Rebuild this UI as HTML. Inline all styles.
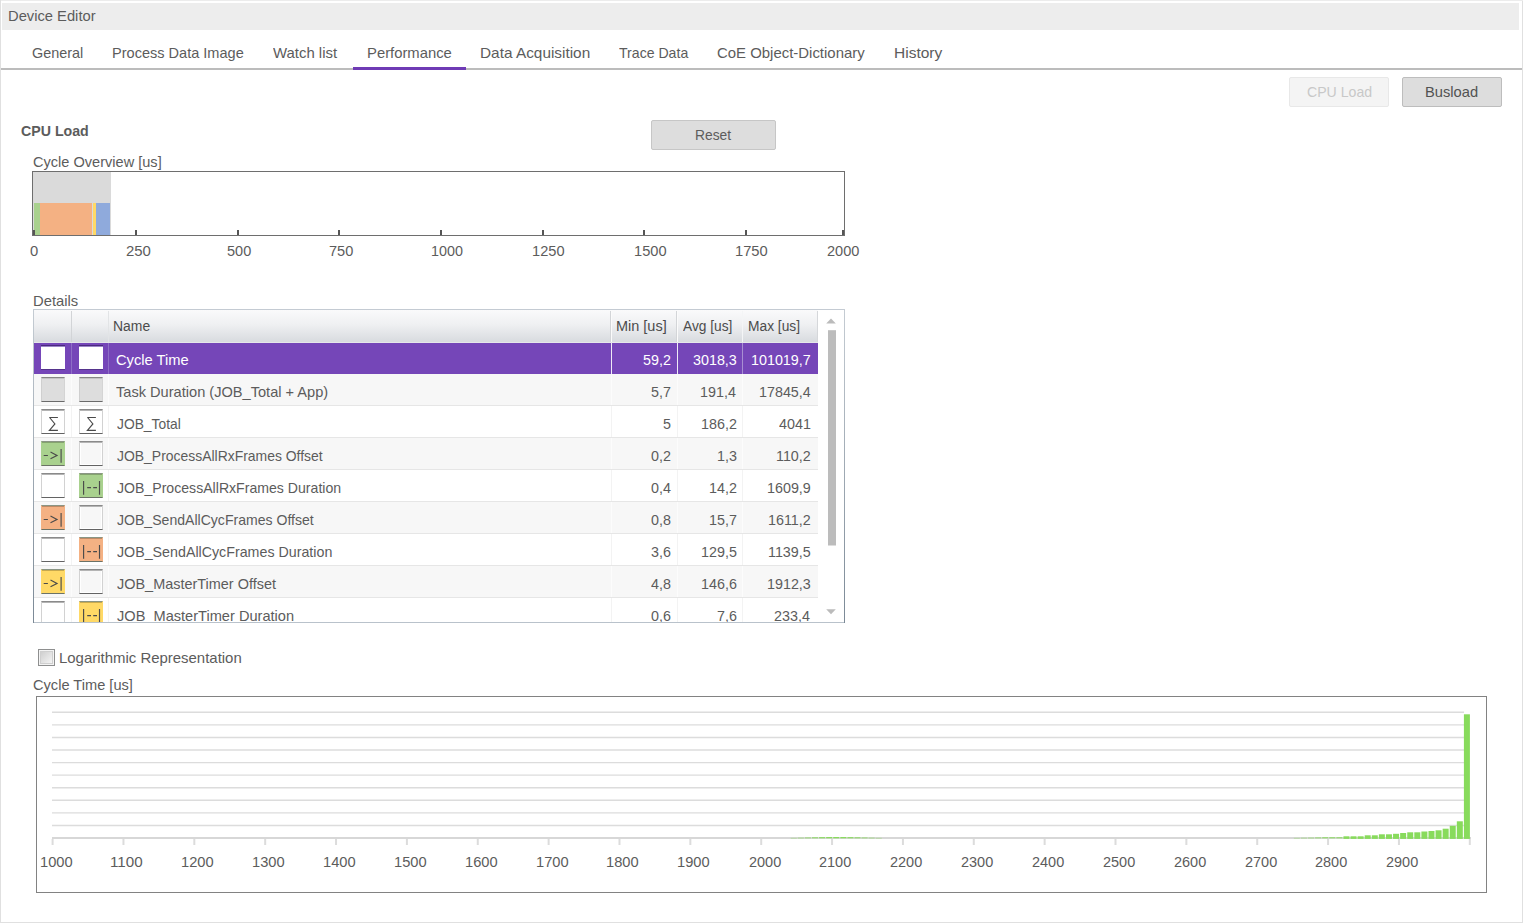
<!DOCTYPE html>
<html><head><meta charset="utf-8"><style>
html,body{margin:0;padding:0;width:1523px;height:923px;overflow:hidden;background:#fff;position:relative}
body{font-family:"Liberation Sans",sans-serif}
.t{position:absolute;white-space:nowrap}
.b{position:absolute}
</style></head><body>
<div class="b" style="left:0px;top:0px;width:1523px;height:1px;background:#ececec"></div>
<div class="b" style="left:0px;top:0px;width:1px;height:923px;background:#e0e0e0"></div>
<div class="b" style="left:1522px;top:1px;width:1px;height:922px;background:#e0e0e0"></div>
<div class="b" style="left:0px;top:922px;width:1523px;height:1px;background:#e0e0e0"></div>
<div class="b" style="left:2px;top:3px;width:1517px;height:27px;background:#ededed"></div>
<div class="t" style="left:7.92px;top:8.30px;font-size:15px;line-height:15px;color:#5c5c5c;transform:scaleX(0.9818);transform-origin:0 0;">Device Editor</div>
<div class="t" style="left:31.63px;top:45.30px;font-size:15px;line-height:15px;color:#5c5c5c;transform:scaleX(0.9613);transform-origin:0 0;">General</div>
<div class="t" style="left:111.84px;top:45.30px;font-size:15px;line-height:15px;color:#5c5c5c;transform:scaleX(0.9694);transform-origin:0 0;">Process Data Image</div>
<div class="t" style="left:273.00px;top:45.30px;font-size:15px;line-height:15px;color:#5c5c5c;transform:scaleX(0.9938);transform-origin:0 0;">Watch list</div>
<div class="t" style="left:366.81px;top:45.30px;font-size:15px;line-height:15px;color:#5c5c5c;transform:scaleX(0.9881);transform-origin:0 0;">Performance</div>
<div class="t" style="left:479.77px;top:45.30px;font-size:15px;line-height:15px;color:#5c5c5c;transform:scaleX(1.0247);transform-origin:0 0;">Data Acquisition</div>
<div class="t" style="left:618.72px;top:45.30px;font-size:15px;line-height:15px;color:#5c5c5c;transform:scaleX(0.9401);transform-origin:0 0;">Trace Data</div>
<div class="t" style="left:717.30px;top:45.30px;font-size:15px;line-height:15px;color:#5c5c5c;transform:scaleX(0.9953);transform-origin:0 0;">CoE Object-Dictionary</div>
<div class="t" style="left:893.76px;top:45.30px;font-size:15px;line-height:15px;color:#5c5c5c;transform:scaleX(1.0330);transform-origin:0 0;">History</div>
<div class="b" style="left:1px;top:68px;width:1521px;height:2px;background:#bcbcbc"></div>
<div class="b" style="left:353px;top:67px;width:113px;height:3px;background:#6f3bb5"></div>
<div class="b" style="left:1289px;top:77px;width:100px;height:30px;background:#f4f4f4;border:1px solid #e8e8e8;box-sizing:border-box;border-radius:2px"></div>
<div class="t" style="left:1306.74px;top:84.30px;font-size:15px;line-height:15px;color:#c8c8c8;transform:scaleX(0.9408);transform-origin:0 0;">CPU Load</div>
<div class="b" style="left:1402px;top:77px;width:100px;height:30px;background:#dddddd;border:1px solid #bdbdbd;box-sizing:border-box;border-radius:2px"></div>
<div class="t" style="left:1425.33px;top:84.30px;font-size:15px;line-height:15px;color:#525252;transform:scaleX(0.9789);transform-origin:0 0;">Busload</div>
<div class="t" style="left:20.73px;top:123.30px;font-size:15px;line-height:15px;color:#5c5c5c;font-weight:bold;transform:scaleX(0.9458);transform-origin:0 0;">CPU Load</div>
<div class="b" style="left:651px;top:120px;width:125px;height:30px;background:#dddddd;border:1px solid #c6c6c6;box-sizing:border-box;border-radius:2px"></div>
<div class="t" style="left:695.09px;top:127.30px;font-size:15px;line-height:15px;color:#5c5c5c;transform:scaleX(0.9208);transform-origin:0 0;">Reset</div>
<div class="t" style="left:32.82px;top:154.30px;font-size:15px;line-height:15px;color:#5c5c5c;transform:scaleX(0.9709);transform-origin:0 0;">Cycle Overview [us]</div>
<div class="b" style="left:32px;top:171px;width:813px;height:65px;border:1px solid #6e6e6e;box-sizing:border-box"></div>
<div class="b" style="left:33px;top:172px;width:78px;height:63px;background:#dadada"></div>
<div class="b" style="left:34px;top:203px;width:6px;height:32px;background:#a9d18e"></div>
<div class="b" style="left:40px;top:203px;width:52px;height:32px;background:#f4b183"></div>
<div class="b" style="left:93px;top:203px;width:3px;height:32px;background:#ffd966"></div>
<div class="b" style="left:96px;top:203px;width:14px;height:32px;background:#8faadc"></div>
<div class="b" style="left:33.0px;top:230px;width:2px;height:5px;background:#555"></div>
<div class="t" style="left:29.61px;top:243.30px;font-size:15px;line-height:15px;color:#5c5c5c;transform:scaleX(0.9863);transform-origin:0 0;">0</div>
<div class="b" style="left:135.1px;top:230px;width:2px;height:5px;background:#555"></div>
<div class="t" style="left:125.60px;top:243.30px;font-size:15px;line-height:15px;color:#5c5c5c;transform:scaleX(0.9958);transform-origin:0 0;">250</div>
<div class="b" style="left:236.7px;top:230px;width:2px;height:5px;background:#555"></div>
<div class="t" style="left:227.42px;top:243.30px;font-size:15px;line-height:15px;color:#5c5c5c;transform:scaleX(0.9665);transform-origin:0 0;">500</div>
<div class="b" style="left:338.3px;top:230px;width:2px;height:5px;background:#555"></div>
<div class="t" style="left:329.02px;top:243.30px;font-size:15px;line-height:15px;color:#5c5c5c;transform:scaleX(0.9706);transform-origin:0 0;">750</div>
<div class="b" style="left:439.9px;top:230px;width:2px;height:5px;background:#555"></div>
<div class="t" style="left:431.25px;top:243.30px;font-size:15px;line-height:15px;color:#5c5c5c;transform:scaleX(0.9558);transform-origin:0 0;">1000</div>
<div class="b" style="left:541.5px;top:230px;width:2px;height:5px;background:#555"></div>
<div class="t" style="left:532.33px;top:243.30px;font-size:15px;line-height:15px;color:#5c5c5c;transform:scaleX(0.9748);transform-origin:0 0;">1250</div>
<div class="b" style="left:643.1px;top:230px;width:2px;height:5px;background:#555"></div>
<div class="t" style="left:634.03px;top:243.30px;font-size:15px;line-height:15px;color:#5c5c5c;transform:scaleX(0.9748);transform-origin:0 0;">1500</div>
<div class="b" style="left:744.7px;top:230px;width:2px;height:5px;background:#555"></div>
<div class="t" style="left:735.32px;top:243.30px;font-size:15px;line-height:15px;color:#5c5c5c;transform:scaleX(0.9811);transform-origin:0 0;">1750</div>
<div class="b" style="left:842.0px;top:230px;width:2px;height:5px;background:#555"></div>
<div class="t" style="left:826.62px;top:243.30px;font-size:15px;line-height:15px;color:#5c5c5c;transform:scaleX(0.9720);transform-origin:0 0;">2000</div>
<div class="t" style="left:32.72px;top:293.30px;font-size:15px;line-height:15px;color:#5c5c5c;transform:scaleX(0.9864);transform-origin:0 0;">Details</div>
<div class="b" style="left:0;top:0;width:1523px;height:623px;overflow:hidden">
<div class="b" style="left:33px;top:309px;width:812px;height:314px;background:#fff"></div>
<div class="b" style="left:34px;top:310px;width:784px;height:32px;background:linear-gradient(#fafafb,#eff0f2 45%,#d8dbdf)"></div>
<div class="b" style="left:71px;top:311px;width:1px;height:31px;background:#d2d4d7"></div>
<div class="b" style="left:108px;top:311px;width:1px;height:31px;background:#e2e4e6"></div>
<div class="b" style="left:610px;top:311px;width:1px;height:31px;background:#d3d5d8"></div>
<div class="b" style="left:611px;top:311px;width:1px;height:31px;background:#fbfbfb"></div>
<div class="b" style="left:676px;top:311px;width:1px;height:31px;background:#d3d5d8"></div>
<div class="b" style="left:677px;top:311px;width:1px;height:31px;background:#fbfbfb"></div>
<div class="b" style="left:742px;top:311px;width:1px;height:31px;background:#f4f5f6"></div>
<div class="b" style="left:817px;top:311px;width:1px;height:31px;background:#d5d7da"></div>
<div class="t" style="left:113.21px;top:319.15px;font-size:14px;line-height:14px;color:#4c4c4c;transform:scaleX(0.9944);transform-origin:0 0;">Name</div>
<div class="t" style="left:616.06px;top:319.15px;font-size:14px;line-height:14px;color:#4c4c4c;transform:scaleX(1.0341);transform-origin:0 0;">Min [us]</div>
<div class="t" style="left:682.90px;top:319.15px;font-size:14px;line-height:14px;color:#4c4c4c;transform:scaleX(0.9817);transform-origin:0 0;">Avg [us]</div>
<div class="t" style="left:747.52px;top:319.15px;font-size:14px;line-height:14px;color:#4c4c4c;transform:scaleX(0.9843);transform-origin:0 0;">Max [us]</div>
<div class="b" style="left:34px;top:342px;width:784px;height:1px;background:#e6e7ea"></div>
<div class="b" style="left:34px;top:343px;width:784px;height:31px;background:#7546b8"></div>
<div class="b" style="left:71px;top:343px;width:1px;height:31px;background:#8e6ec6"></div>
<div class="b" style="left:108px;top:343px;width:1px;height:31px;background:#8e6ec6"></div>
<div class="b" style="left:611px;top:343px;width:1px;height:31px;background:#efeaf6"></div>
<div class="b" style="left:677px;top:343px;width:1px;height:31px;background:#efeaf6"></div>
<div class="b" style="left:742px;top:343px;width:1px;height:31px;background:#a88fd2"></div>
<div class="b" style="left:41px;top:345px;width:24px;height:25px;box-sizing:border-box;background:#fff;border-top:1px solid #4a2a7e;box-shadow:inset 0 1px 0 #9c84c8;border-bottom:1px solid #55338c"></div>
<div class="b" style="left:79px;top:345px;width:24px;height:25px;box-sizing:border-box;background:#fff;border-top:1px solid #4a2a7e;box-shadow:inset 0 1px 0 #9c84c8;border-bottom:1px solid #55338c"></div>
<div class="t" style="left:116.01px;top:352.30px;font-size:15px;line-height:15px;color:#fff;transform:scaleX(0.9808);transform-origin:0 0;">Cycle Time</div>
<div class="t" style="left:643.08px;top:352.30px;font-size:15px;line-height:15px;color:#fff;transform:scaleX(0.9550);transform-origin:0 0;">59,2</div>
<div class="t" style="left:692.83px;top:352.30px;font-size:15px;line-height:15px;color:#fff;transform:scaleX(0.9550);transform-origin:0 0;">3018,3</div>
<div class="t" style="left:750.98px;top:352.30px;font-size:15px;line-height:15px;color:#fff;transform:scaleX(0.9550);transform-origin:0 0;">101019,7</div>
<div class="b" style="left:34px;top:374px;width:784px;height:32px;background:#f7f7f7"></div>
<div class="b" style="left:34px;top:405px;width:784px;height:1px;background:#e6e6e6"></div>
<div class="b" style="left:71px;top:374px;width:1px;height:31px;background:#fcfcfc"></div>
<div class="b" style="left:108px;top:374px;width:1px;height:31px;background:#fcfcfc"></div>
<div class="b" style="left:611px;top:374px;width:1px;height:31px;background:#fcfcfc"></div>
<div class="b" style="left:677px;top:374px;width:1px;height:31px;background:#fcfcfc"></div>
<div class="b" style="left:742px;top:374px;width:1px;height:31px;background:#fcfcfc"></div>
<div class="b" style="left:41px;top:377px;width:24px;height:25px;box-sizing:border-box;background:#dddddd;border-top:1px solid #868686;border-bottom:1px solid #6a6a6a;border-left:1px solid #cfcfcf;border-right:1px solid #d4d4d4;box-shadow:inset 0 1px 0 #c4c4c4"></div>
<div class="b" style="left:79px;top:377px;width:24px;height:25px;box-sizing:border-box;background:#dddddd;border-top:1px solid #868686;border-bottom:1px solid #6a6a6a;border-left:1px solid #cfcfcf;border-right:1px solid #d4d4d4;box-shadow:inset 0 1px 0 #c4c4c4"></div>
<div class="t" style="left:116.41px;top:384.30px;font-size:15px;line-height:15px;color:#5c5c5c;transform:scaleX(0.9732);transform-origin:0 0;">Task Duration (JOB_Total + App)</div>
<div class="t" style="left:651.10px;top:384.30px;font-size:15px;line-height:15px;color:#5c5c5c;transform:scaleX(0.9550);transform-origin:0 0;">5,7</div>
<div class="t" style="left:700.47px;top:384.30px;font-size:15px;line-height:15px;color:#5c5c5c;transform:scaleX(0.9550);transform-origin:0 0;">191,4</div>
<div class="t" style="left:758.53px;top:384.30px;font-size:15px;line-height:15px;color:#5c5c5c;transform:scaleX(0.9550);transform-origin:0 0;">17845,4</div>
<div class="b" style="left:34px;top:406px;width:784px;height:32px;background:#ffffff"></div>
<div class="b" style="left:34px;top:437px;width:784px;height:1px;background:#e6e6e6"></div>
<div class="b" style="left:71px;top:406px;width:1px;height:31px;background:#f3f3f3"></div>
<div class="b" style="left:108px;top:406px;width:1px;height:31px;background:#f3f3f3"></div>
<div class="b" style="left:611px;top:406px;width:1px;height:31px;background:#f3f3f3"></div>
<div class="b" style="left:677px;top:406px;width:1px;height:31px;background:#f3f3f3"></div>
<div class="b" style="left:742px;top:406px;width:1px;height:31px;background:#f3f3f3"></div>
<div class="b" style="left:41px;top:409px;width:24px;height:25px;box-sizing:border-box;background:transparent;border-top:1px solid #8a8a8a;border-bottom:1px solid #636363;border-left:1px solid #d2d2d2;border-right:1px solid #d2d2d2;box-shadow:inset 0 1px 0 #b4b4b4, inset 1px 0 0 #fff, inset -1px 0 0 #fff, inset 0 -1px 0 #fff"></div>
<svg class="b" style="left:41px;top:409px" width="24" height="25" viewBox="0 0 24 25"><path d="M8.2 8.5 H16.9 M8.6 8.5 L13.9 14.9 L8.4 21.4 H16.9" fill="none" stroke="#4a4a4a" stroke-width="1.15"/></svg>
<div class="b" style="left:79px;top:409px;width:24px;height:25px;box-sizing:border-box;background:transparent;border-top:1px solid #8a8a8a;border-bottom:1px solid #636363;border-left:1px solid #d2d2d2;border-right:1px solid #d2d2d2;box-shadow:inset 0 1px 0 #b4b4b4, inset 1px 0 0 #fff, inset -1px 0 0 #fff, inset 0 -1px 0 #fff"></div>
<svg class="b" style="left:79px;top:409px" width="24" height="25" viewBox="0 0 24 25"><path d="M8.2 8.5 H16.9 M8.6 8.5 L13.9 14.9 L8.4 21.4 H16.9" fill="none" stroke="#4a4a4a" stroke-width="1.15"/></svg>
<div class="t" style="left:116.52px;top:416.30px;font-size:15px;line-height:15px;color:#5c5c5c;transform:scaleX(0.9207);transform-origin:0 0;">JOB_Total</div>
<div class="t" style="left:662.85px;top:416.30px;font-size:15px;line-height:15px;color:#5c5c5c;transform:scaleX(0.9550);transform-origin:0 0;">5</div>
<div class="t" style="left:700.86px;top:416.30px;font-size:15px;line-height:15px;color:#5c5c5c;transform:scaleX(0.9550);transform-origin:0 0;">186,2</div>
<div class="t" style="left:778.77px;top:416.30px;font-size:15px;line-height:15px;color:#5c5c5c;transform:scaleX(0.9550);transform-origin:0 0;">4041</div>
<div class="b" style="left:34px;top:438px;width:784px;height:32px;background:#f7f7f7"></div>
<div class="b" style="left:34px;top:469px;width:784px;height:1px;background:#e6e6e6"></div>
<div class="b" style="left:71px;top:438px;width:1px;height:31px;background:#fcfcfc"></div>
<div class="b" style="left:108px;top:438px;width:1px;height:31px;background:#fcfcfc"></div>
<div class="b" style="left:611px;top:438px;width:1px;height:31px;background:#fcfcfc"></div>
<div class="b" style="left:677px;top:438px;width:1px;height:31px;background:#fcfcfc"></div>
<div class="b" style="left:742px;top:438px;width:1px;height:31px;background:#fcfcfc"></div>
<div class="b" style="left:41px;top:441px;width:24px;height:25px;box-sizing:border-box;background:#a9d18e;border-top:1px solid #8a9584;border-bottom:1px solid #6b7266;border-left:1px solid #a9d18e;border-right:1px solid #a9d18e;box-shadow:inset 0 1px 0 rgba(0,0,0,0.22)"></div>
<svg class="b" style="left:41px;top:441px" width="24" height="25" viewBox="0 0 24 25"><path d="M2.7 14.5 H6.9 M9.5 11.1 L16 14.4 L9.5 17.7 M20.1 8.1 V21.8" fill="none" stroke="#4a4a4a" stroke-width="1.15"/></svg>
<div class="b" style="left:79px;top:441px;width:24px;height:25px;box-sizing:border-box;background:transparent;border-top:1px solid #8a8a8a;border-bottom:1px solid #636363;border-left:1px solid #d2d2d2;border-right:1px solid #d2d2d2;box-shadow:inset 0 1px 0 #b4b4b4, inset 1px 0 0 #fff, inset -1px 0 0 #fff, inset 0 -1px 0 #fff"></div>
<div class="t" style="left:116.51px;top:448.30px;font-size:15px;line-height:15px;color:#5c5c5c;transform:scaleX(0.9286);transform-origin:0 0;">JOB_ProcessAllRxFrames Offset</div>
<div class="t" style="left:651.10px;top:448.30px;font-size:15px;line-height:15px;color:#5c5c5c;transform:scaleX(0.9550);transform-origin:0 0;">0,2</div>
<div class="t" style="left:716.71px;top:448.30px;font-size:15px;line-height:15px;color:#5c5c5c;transform:scaleX(0.9550);transform-origin:0 0;">1,3</div>
<div class="t" style="left:775.91px;top:448.30px;font-size:15px;line-height:15px;color:#5c5c5c;transform:scaleX(0.9550);transform-origin:0 0;">110,2</div>
<div class="b" style="left:34px;top:470px;width:784px;height:32px;background:#ffffff"></div>
<div class="b" style="left:34px;top:501px;width:784px;height:1px;background:#e6e6e6"></div>
<div class="b" style="left:71px;top:470px;width:1px;height:31px;background:#f3f3f3"></div>
<div class="b" style="left:108px;top:470px;width:1px;height:31px;background:#f3f3f3"></div>
<div class="b" style="left:611px;top:470px;width:1px;height:31px;background:#f3f3f3"></div>
<div class="b" style="left:677px;top:470px;width:1px;height:31px;background:#f3f3f3"></div>
<div class="b" style="left:742px;top:470px;width:1px;height:31px;background:#f3f3f3"></div>
<div class="b" style="left:41px;top:473px;width:24px;height:25px;box-sizing:border-box;background:transparent;border-top:1px solid #8a8a8a;border-bottom:1px solid #636363;border-left:1px solid #d2d2d2;border-right:1px solid #d2d2d2;box-shadow:inset 0 1px 0 #b4b4b4, inset 1px 0 0 #fff, inset -1px 0 0 #fff, inset 0 -1px 0 #fff"></div>
<div class="b" style="left:79px;top:473px;width:24px;height:25px;box-sizing:border-box;background:#a9d18e;border-top:1px solid #8a9584;border-bottom:1px solid #6b7266;border-left:1px solid #a9d18e;border-right:1px solid #a9d18e;box-shadow:inset 0 1px 0 rgba(0,0,0,0.22)"></div>
<svg class="b" style="left:79px;top:473px" width="24" height="25" viewBox="0 0 24 25"><path d="M4.6 8.1 V21.8 M8.2 14.6 H12 M14.2 14.6 H18 M20.5 8.1 V21.8" fill="none" stroke="#4a4a4a" stroke-width="1.15"/></svg>
<div class="t" style="left:116.51px;top:480.30px;font-size:15px;line-height:15px;color:#5c5c5c;transform:scaleX(0.9402);transform-origin:0 0;">JOB_ProcessAllRxFrames Duration</div>
<div class="t" style="left:650.72px;top:480.30px;font-size:15px;line-height:15px;color:#5c5c5c;transform:scaleX(0.9550);transform-origin:0 0;">0,4</div>
<div class="t" style="left:708.78px;top:480.30px;font-size:15px;line-height:15px;color:#5c5c5c;transform:scaleX(0.9550);transform-origin:0 0;">14,2</div>
<div class="t" style="left:766.83px;top:480.30px;font-size:15px;line-height:15px;color:#5c5c5c;transform:scaleX(0.9550);transform-origin:0 0;">1609,9</div>
<div class="b" style="left:34px;top:502px;width:784px;height:32px;background:#f7f7f7"></div>
<div class="b" style="left:34px;top:533px;width:784px;height:1px;background:#e6e6e6"></div>
<div class="b" style="left:71px;top:502px;width:1px;height:31px;background:#fcfcfc"></div>
<div class="b" style="left:108px;top:502px;width:1px;height:31px;background:#fcfcfc"></div>
<div class="b" style="left:611px;top:502px;width:1px;height:31px;background:#fcfcfc"></div>
<div class="b" style="left:677px;top:502px;width:1px;height:31px;background:#fcfcfc"></div>
<div class="b" style="left:742px;top:502px;width:1px;height:31px;background:#fcfcfc"></div>
<div class="b" style="left:41px;top:505px;width:24px;height:25px;box-sizing:border-box;background:#f4b183;border-top:1px solid #8a9584;border-bottom:1px solid #6b7266;border-left:1px solid #f4b183;border-right:1px solid #f4b183;box-shadow:inset 0 1px 0 rgba(0,0,0,0.22)"></div>
<svg class="b" style="left:41px;top:505px" width="24" height="25" viewBox="0 0 24 25"><path d="M2.7 14.5 H6.9 M9.5 11.1 L16 14.4 L9.5 17.7 M20.1 8.1 V21.8" fill="none" stroke="#4a4a4a" stroke-width="1.15"/></svg>
<div class="b" style="left:79px;top:505px;width:24px;height:25px;box-sizing:border-box;background:transparent;border-top:1px solid #8a8a8a;border-bottom:1px solid #636363;border-left:1px solid #d2d2d2;border-right:1px solid #d2d2d2;box-shadow:inset 0 1px 0 #b4b4b4, inset 1px 0 0 #fff, inset -1px 0 0 #fff, inset 0 -1px 0 #fff"></div>
<div class="t" style="left:116.51px;top:512.30px;font-size:15px;line-height:15px;color:#5c5c5c;transform:scaleX(0.9379);transform-origin:0 0;">JOB_SendAllCycFrames Offset</div>
<div class="t" style="left:651.01px;top:512.30px;font-size:15px;line-height:15px;color:#5c5c5c;transform:scaleX(0.9550);transform-origin:0 0;">0,8</div>
<div class="t" style="left:708.78px;top:512.30px;font-size:15px;line-height:15px;color:#5c5c5c;transform:scaleX(0.9550);transform-origin:0 0;">15,7</div>
<div class="t" style="left:767.98px;top:512.30px;font-size:15px;line-height:15px;color:#5c5c5c;transform:scaleX(0.9550);transform-origin:0 0;">1611,2</div>
<div class="b" style="left:34px;top:534px;width:784px;height:32px;background:#ffffff"></div>
<div class="b" style="left:34px;top:565px;width:784px;height:1px;background:#e6e6e6"></div>
<div class="b" style="left:71px;top:534px;width:1px;height:31px;background:#f3f3f3"></div>
<div class="b" style="left:108px;top:534px;width:1px;height:31px;background:#f3f3f3"></div>
<div class="b" style="left:611px;top:534px;width:1px;height:31px;background:#f3f3f3"></div>
<div class="b" style="left:677px;top:534px;width:1px;height:31px;background:#f3f3f3"></div>
<div class="b" style="left:742px;top:534px;width:1px;height:31px;background:#f3f3f3"></div>
<div class="b" style="left:41px;top:537px;width:24px;height:25px;box-sizing:border-box;background:transparent;border-top:1px solid #8a8a8a;border-bottom:1px solid #636363;border-left:1px solid #d2d2d2;border-right:1px solid #d2d2d2;box-shadow:inset 0 1px 0 #b4b4b4, inset 1px 0 0 #fff, inset -1px 0 0 #fff, inset 0 -1px 0 #fff"></div>
<div class="b" style="left:79px;top:537px;width:24px;height:25px;box-sizing:border-box;background:#f4b183;border-top:1px solid #8a9584;border-bottom:1px solid #6b7266;border-left:1px solid #f4b183;border-right:1px solid #f4b183;box-shadow:inset 0 1px 0 rgba(0,0,0,0.22)"></div>
<svg class="b" style="left:79px;top:537px" width="24" height="25" viewBox="0 0 24 25"><path d="M4.6 8.1 V21.8 M8.2 14.6 H12 M14.2 14.6 H18 M20.5 8.1 V21.8" fill="none" stroke="#4a4a4a" stroke-width="1.15"/></svg>
<div class="t" style="left:116.51px;top:544.30px;font-size:15px;line-height:15px;color:#5c5c5c;transform:scaleX(0.9495);transform-origin:0 0;">JOB_SendAllCycFrames Duration</div>
<div class="t" style="left:651.01px;top:544.30px;font-size:15px;line-height:15px;color:#5c5c5c;transform:scaleX(0.9550);transform-origin:0 0;">3,6</div>
<div class="t" style="left:700.66px;top:544.30px;font-size:15px;line-height:15px;color:#5c5c5c;transform:scaleX(0.9550);transform-origin:0 0;">129,5</div>
<div class="t" style="left:767.79px;top:544.30px;font-size:15px;line-height:15px;color:#5c5c5c;transform:scaleX(0.9550);transform-origin:0 0;">1139,5</div>
<div class="b" style="left:34px;top:566px;width:784px;height:32px;background:#f7f7f7"></div>
<div class="b" style="left:34px;top:597px;width:784px;height:1px;background:#e6e6e6"></div>
<div class="b" style="left:71px;top:566px;width:1px;height:31px;background:#fcfcfc"></div>
<div class="b" style="left:108px;top:566px;width:1px;height:31px;background:#fcfcfc"></div>
<div class="b" style="left:611px;top:566px;width:1px;height:31px;background:#fcfcfc"></div>
<div class="b" style="left:677px;top:566px;width:1px;height:31px;background:#fcfcfc"></div>
<div class="b" style="left:742px;top:566px;width:1px;height:31px;background:#fcfcfc"></div>
<div class="b" style="left:41px;top:569px;width:24px;height:25px;box-sizing:border-box;background:#ffd966;border-top:1px solid #8a9584;border-bottom:1px solid #6b7266;border-left:1px solid #ffd966;border-right:1px solid #ffd966;box-shadow:inset 0 1px 0 rgba(0,0,0,0.22)"></div>
<svg class="b" style="left:41px;top:569px" width="24" height="25" viewBox="0 0 24 25"><path d="M2.7 14.5 H6.9 M9.5 11.1 L16 14.4 L9.5 17.7 M20.1 8.1 V21.8" fill="none" stroke="#4a4a4a" stroke-width="1.15"/></svg>
<div class="b" style="left:79px;top:569px;width:24px;height:25px;box-sizing:border-box;background:transparent;border-top:1px solid #8a8a8a;border-bottom:1px solid #636363;border-left:1px solid #d2d2d2;border-right:1px solid #d2d2d2;box-shadow:inset 0 1px 0 #b4b4b4, inset 1px 0 0 #fff, inset -1px 0 0 #fff, inset 0 -1px 0 #fff"></div>
<div class="t" style="left:116.51px;top:576.30px;font-size:15px;line-height:15px;color:#5c5c5c;transform:scaleX(0.9630);transform-origin:0 0;">JOB_MasterTimer Offset</div>
<div class="t" style="left:651.01px;top:576.30px;font-size:15px;line-height:15px;color:#5c5c5c;transform:scaleX(0.9550);transform-origin:0 0;">4,8</div>
<div class="t" style="left:700.76px;top:576.30px;font-size:15px;line-height:15px;color:#5c5c5c;transform:scaleX(0.9550);transform-origin:0 0;">146,6</div>
<div class="t" style="left:766.83px;top:576.30px;font-size:15px;line-height:15px;color:#5c5c5c;transform:scaleX(0.9550);transform-origin:0 0;">1912,3</div>
<div class="b" style="left:34px;top:598px;width:784px;height:32px;background:#ffffff"></div>
<div class="b" style="left:34px;top:629px;width:784px;height:1px;background:#e6e6e6"></div>
<div class="b" style="left:71px;top:598px;width:1px;height:31px;background:#f3f3f3"></div>
<div class="b" style="left:108px;top:598px;width:1px;height:31px;background:#f3f3f3"></div>
<div class="b" style="left:611px;top:598px;width:1px;height:31px;background:#f3f3f3"></div>
<div class="b" style="left:677px;top:598px;width:1px;height:31px;background:#f3f3f3"></div>
<div class="b" style="left:742px;top:598px;width:1px;height:31px;background:#f3f3f3"></div>
<div class="b" style="left:41px;top:601px;width:24px;height:25px;box-sizing:border-box;background:transparent;border-top:1px solid #8a8a8a;border-bottom:1px solid #636363;border-left:1px solid #d2d2d2;border-right:1px solid #d2d2d2;box-shadow:inset 0 1px 0 #b4b4b4, inset 1px 0 0 #fff, inset -1px 0 0 #fff, inset 0 -1px 0 #fff"></div>
<div class="b" style="left:79px;top:601px;width:24px;height:25px;box-sizing:border-box;background:#ffd966;border-top:1px solid #8a9584;border-bottom:1px solid #6b7266;border-left:1px solid #ffd966;border-right:1px solid #ffd966;box-shadow:inset 0 1px 0 rgba(0,0,0,0.22)"></div>
<svg class="b" style="left:79px;top:601px" width="24" height="25" viewBox="0 0 24 25"><path d="M4.6 8.1 V21.8 M8.2 14.6 H12 M14.2 14.6 H18 M20.5 8.1 V21.8" fill="none" stroke="#4a4a4a" stroke-width="1.15"/></svg>
<div class="t" style="left:116.51px;top:608.30px;font-size:15px;line-height:15px;color:#5c5c5c;transform:scaleX(0.9729);transform-origin:0 0;">JOB_MasterTimer Duration</div>
<div class="t" style="left:651.01px;top:608.30px;font-size:15px;line-height:15px;color:#5c5c5c;transform:scaleX(0.9550);transform-origin:0 0;">0,6</div>
<div class="t" style="left:716.71px;top:608.30px;font-size:15px;line-height:15px;color:#5c5c5c;transform:scaleX(0.9550);transform-origin:0 0;">7,6</div>
<div class="t" style="left:774.47px;top:608.30px;font-size:15px;line-height:15px;color:#5c5c5c;transform:scaleX(0.9550);transform-origin:0 0;">233,4</div>
<div class="b" style="left:818px;top:310px;width:26px;height:312px;background:#fff"></div>
<svg class="b" style="left:818px;top:310px" width="26" height="312" viewBox="0 0 26 312"><polygon points="8.2,13.6 13,8.5 17.8,13.6" fill="#bbb"/><rect x="10" y="20.2" width="8" height="215.3" fill="#bcbcbc"/><polygon points="8.2,299.2 17.8,299.2 13,304.3" fill="#bbb"/></svg>
<div class="b" style="left:817px;top:311px;width:1px;height:31px;background:#d5d7da"></div>
<div class="b" style="left:33px;top:309px;width:812px;height:1px;background:#c4cbd3"></div>
<div class="b" style="left:33px;top:622px;width:812px;height:1px;background:#b9c2cb"></div>
<div class="b" style="left:33px;top:309px;width:1px;height:314px;background:linear-gradient(#c5ccd3,#7b8996)"></div>
<div class="b" style="left:844px;top:309px;width:1px;height:314px;background:linear-gradient(#c5ccd3,#7b8996)"></div>
</div>
<div class="b" style="left:38px;top:649px;width:17px;height:17px;border:1px solid #8e8f8f;box-sizing:border-box;background:#f4f4f4"></div>
<div class="b" style="left:40px;top:651px;width:13px;height:13px;border:1px solid #cfcfcf;box-sizing:border-box;background:linear-gradient(135deg,#cfcfcf,#f4f4f4)"></div>
<div class="t" style="left:59.10px;top:650.30px;font-size:15px;line-height:15px;color:#5c5c5c;transform:scaleX(0.9961);transform-origin:0 0;">Logarithmic Representation</div>
<div class="t" style="left:32.82px;top:676.80px;font-size:15px;line-height:15px;color:#5c5c5c;transform:scaleX(0.9742);transform-origin:0 0;">Cycle Time [us]</div>
<div class="b" style="left:36px;top:696px;width:1451px;height:197px;border:1px solid #828282;box-sizing:border-box"></div>
<svg class="b" style="left:0;top:0" width="1523" height="923" viewBox="0 0 1523 923"><line x1="52" x2="1464" y1="712.30" y2="712.30" stroke="#dcdcdc" stroke-width="1.4"/><line x1="52" x2="1464" y1="724.87" y2="724.87" stroke="#dcdcdc" stroke-width="1.4"/><line x1="52" x2="1464" y1="737.44" y2="737.44" stroke="#dcdcdc" stroke-width="1.4"/><line x1="52" x2="1464" y1="750.01" y2="750.01" stroke="#dcdcdc" stroke-width="1.4"/><line x1="52" x2="1464" y1="762.58" y2="762.58" stroke="#dcdcdc" stroke-width="1.4"/><line x1="52" x2="1464" y1="775.15" y2="775.15" stroke="#dcdcdc" stroke-width="1.4"/><line x1="52" x2="1464" y1="787.72" y2="787.72" stroke="#dcdcdc" stroke-width="1.4"/><line x1="52" x2="1464" y1="800.29" y2="800.29" stroke="#dcdcdc" stroke-width="1.4"/><line x1="52" x2="1464" y1="812.86" y2="812.86" stroke="#dcdcdc" stroke-width="1.4"/><line x1="52" x2="1464" y1="825.43" y2="825.43" stroke="#dcdcdc" stroke-width="1.4"/><line x1="52" x2="1471" y1="838" y2="838" stroke="#afafaf" stroke-width="1.2"/><rect x="1463.91" y="714.30" width="5.99" height="124.60" fill="#88db5c"/><rect x="1456.83" y="821.30" width="5.99" height="17.60" fill="#88db5c"/><rect x="1449.74" y="825.80" width="5.99" height="13.10" fill="#88db5c"/><rect x="1442.66" y="828.70" width="5.99" height="10.20" fill="#88db5c"/><rect x="1435.57" y="830.30" width="5.99" height="8.60" fill="#88db5c"/><rect x="1428.48" y="831.00" width="5.99" height="7.90" fill="#88db5c"/><rect x="1421.40" y="831.50" width="5.99" height="7.40" fill="#88db5c"/><rect x="1414.31" y="832.30" width="5.99" height="6.60" fill="#88db5c"/><rect x="1407.23" y="832.30" width="5.99" height="6.60" fill="#88db5c"/><rect x="1400.14" y="833.00" width="5.99" height="5.90" fill="#88db5c"/><rect x="1393.05" y="833.80" width="5.99" height="5.10" fill="#88db5c"/><rect x="1385.97" y="834.30" width="5.99" height="4.60" fill="#88db5c"/><rect x="1378.88" y="834.30" width="5.99" height="4.60" fill="#88db5c"/><rect x="1371.80" y="835.30" width="5.99" height="3.60" fill="#88db5c"/><rect x="1364.71" y="835.30" width="5.99" height="3.60" fill="#88db5c"/><rect x="1357.62" y="836.30" width="5.99" height="2.60" fill="#88db5c"/><rect x="1350.54" y="836.30" width="5.99" height="2.60" fill="#88db5c"/><rect x="1343.45" y="836.30" width="5.99" height="2.60" fill="#88db5c"/><rect x="1336.37" y="837.30" width="5.99" height="1.00" fill="#88db5c"/><rect x="1329.28" y="837.30" width="5.99" height="1.00" fill="#88db5c"/><rect x="1322.19" y="837.30" width="5.99" height="1.00" fill="#88db5c"/><rect x="1315.11" y="837.50" width="5.99" height="0.80" fill="#88db5c"/><rect x="1308.02" y="837.70" width="5.99" height="0.60" fill="#88db5c"/><rect x="1300.94" y="837.80" width="5.99" height="0.50" fill="#88db5c"/><rect x="1293.85" y="837.90" width="5.99" height="0.40" fill="#88db5c"/><rect x="790.74" y="837.90" width="5.99" height="0.40" fill="#88db5c"/><rect x="797.83" y="837.73" width="5.99" height="0.57" fill="#88db5c"/><rect x="804.92" y="837.53" width="5.99" height="0.77" fill="#88db5c"/><rect x="812.00" y="837.33" width="5.99" height="0.97" fill="#88db5c"/><rect x="819.09" y="837.16" width="5.99" height="1.14" fill="#88db5c"/><rect x="826.17" y="837.04" width="5.99" height="1.26" fill="#88db5c"/><rect x="833.26" y="837.00" width="5.99" height="1.30" fill="#88db5c"/><rect x="840.35" y="837.04" width="5.99" height="1.26" fill="#88db5c"/><rect x="847.43" y="837.16" width="5.99" height="1.14" fill="#88db5c"/><rect x="854.52" y="837.33" width="5.99" height="0.97" fill="#88db5c"/><rect x="861.60" y="837.53" width="5.99" height="0.77" fill="#88db5c"/><rect x="868.69" y="837.73" width="5.99" height="0.57" fill="#88db5c"/><rect x="875.78" y="837.90" width="5.99" height="0.40" fill="#88db5c"/><rect x="51.60" y="839" width="2" height="6" fill="#dcdcdc"/><rect x="122.46" y="839" width="2" height="6" fill="#dcdcdc"/><rect x="193.32" y="839" width="2" height="6" fill="#dcdcdc"/><rect x="264.18" y="839" width="2" height="6" fill="#dcdcdc"/><rect x="335.04" y="839" width="2" height="6" fill="#dcdcdc"/><rect x="405.90" y="839" width="2" height="6" fill="#dcdcdc"/><rect x="476.76" y="839" width="2" height="6" fill="#dcdcdc"/><rect x="547.62" y="839" width="2" height="6" fill="#dcdcdc"/><rect x="618.48" y="839" width="2" height="6" fill="#dcdcdc"/><rect x="689.34" y="839" width="2" height="6" fill="#dcdcdc"/><rect x="760.20" y="839" width="2" height="6" fill="#dcdcdc"/><rect x="831.06" y="839" width="2" height="6" fill="#dcdcdc"/><rect x="901.92" y="839" width="2" height="6" fill="#dcdcdc"/><rect x="972.78" y="839" width="2" height="6" fill="#dcdcdc"/><rect x="1043.64" y="839" width="2" height="6" fill="#dcdcdc"/><rect x="1114.50" y="839" width="2" height="6" fill="#dcdcdc"/><rect x="1185.36" y="839" width="2" height="6" fill="#dcdcdc"/><rect x="1256.22" y="839" width="2" height="6" fill="#dcdcdc"/><rect x="1327.08" y="839" width="2" height="6" fill="#dcdcdc"/><rect x="1397.94" y="839" width="2" height="6" fill="#dcdcdc"/><rect x="1468.80" y="839" width="2" height="6" fill="#dcdcdc"/></svg>
<div class="t" style="left:39.52px;top:854.30px;font-size:15px;line-height:15px;color:#5c5c5c;transform:scaleX(0.9779);transform-origin:0 0;">1000</div>
<div class="t" style="left:110.35px;top:854.30px;font-size:15px;line-height:15px;color:#5c5c5c;transform:scaleX(1.0131);transform-origin:0 0;">1100</div>
<div class="t" style="left:181.24px;top:854.30px;font-size:15px;line-height:15px;color:#5c5c5c;transform:scaleX(0.9779);transform-origin:0 0;">1200</div>
<div class="t" style="left:252.10px;top:854.30px;font-size:15px;line-height:15px;color:#5c5c5c;transform:scaleX(0.9779);transform-origin:0 0;">1300</div>
<div class="t" style="left:322.96px;top:854.30px;font-size:15px;line-height:15px;color:#5c5c5c;transform:scaleX(0.9779);transform-origin:0 0;">1400</div>
<div class="t" style="left:393.82px;top:854.30px;font-size:15px;line-height:15px;color:#5c5c5c;transform:scaleX(0.9779);transform-origin:0 0;">1500</div>
<div class="t" style="left:464.68px;top:854.30px;font-size:15px;line-height:15px;color:#5c5c5c;transform:scaleX(0.9779);transform-origin:0 0;">1600</div>
<div class="t" style="left:535.54px;top:854.30px;font-size:15px;line-height:15px;color:#5c5c5c;transform:scaleX(0.9779);transform-origin:0 0;">1700</div>
<div class="t" style="left:606.40px;top:854.30px;font-size:15px;line-height:15px;color:#5c5c5c;transform:scaleX(0.9779);transform-origin:0 0;">1800</div>
<div class="t" style="left:677.26px;top:854.30px;font-size:15px;line-height:15px;color:#5c5c5c;transform:scaleX(0.9779);transform-origin:0 0;">1900</div>
<div class="t" style="left:748.52px;top:854.30px;font-size:15px;line-height:15px;color:#5c5c5c;transform:scaleX(0.9657);transform-origin:0 0;">2000</div>
<div class="t" style="left:819.38px;top:854.30px;font-size:15px;line-height:15px;color:#5c5c5c;transform:scaleX(0.9657);transform-origin:0 0;">2100</div>
<div class="t" style="left:890.24px;top:854.30px;font-size:15px;line-height:15px;color:#5c5c5c;transform:scaleX(0.9657);transform-origin:0 0;">2200</div>
<div class="t" style="left:961.10px;top:854.30px;font-size:15px;line-height:15px;color:#5c5c5c;transform:scaleX(0.9657);transform-origin:0 0;">2300</div>
<div class="t" style="left:1031.96px;top:854.30px;font-size:15px;line-height:15px;color:#5c5c5c;transform:scaleX(0.9657);transform-origin:0 0;">2400</div>
<div class="t" style="left:1102.82px;top:854.30px;font-size:15px;line-height:15px;color:#5c5c5c;transform:scaleX(0.9657);transform-origin:0 0;">2500</div>
<div class="t" style="left:1173.68px;top:854.30px;font-size:15px;line-height:15px;color:#5c5c5c;transform:scaleX(0.9657);transform-origin:0 0;">2600</div>
<div class="t" style="left:1244.54px;top:854.30px;font-size:15px;line-height:15px;color:#5c5c5c;transform:scaleX(0.9657);transform-origin:0 0;">2700</div>
<div class="t" style="left:1315.40px;top:854.30px;font-size:15px;line-height:15px;color:#5c5c5c;transform:scaleX(0.9657);transform-origin:0 0;">2800</div>
<div class="t" style="left:1386.26px;top:854.30px;font-size:15px;line-height:15px;color:#5c5c5c;transform:scaleX(0.9657);transform-origin:0 0;">2900</div>
</body></html>
